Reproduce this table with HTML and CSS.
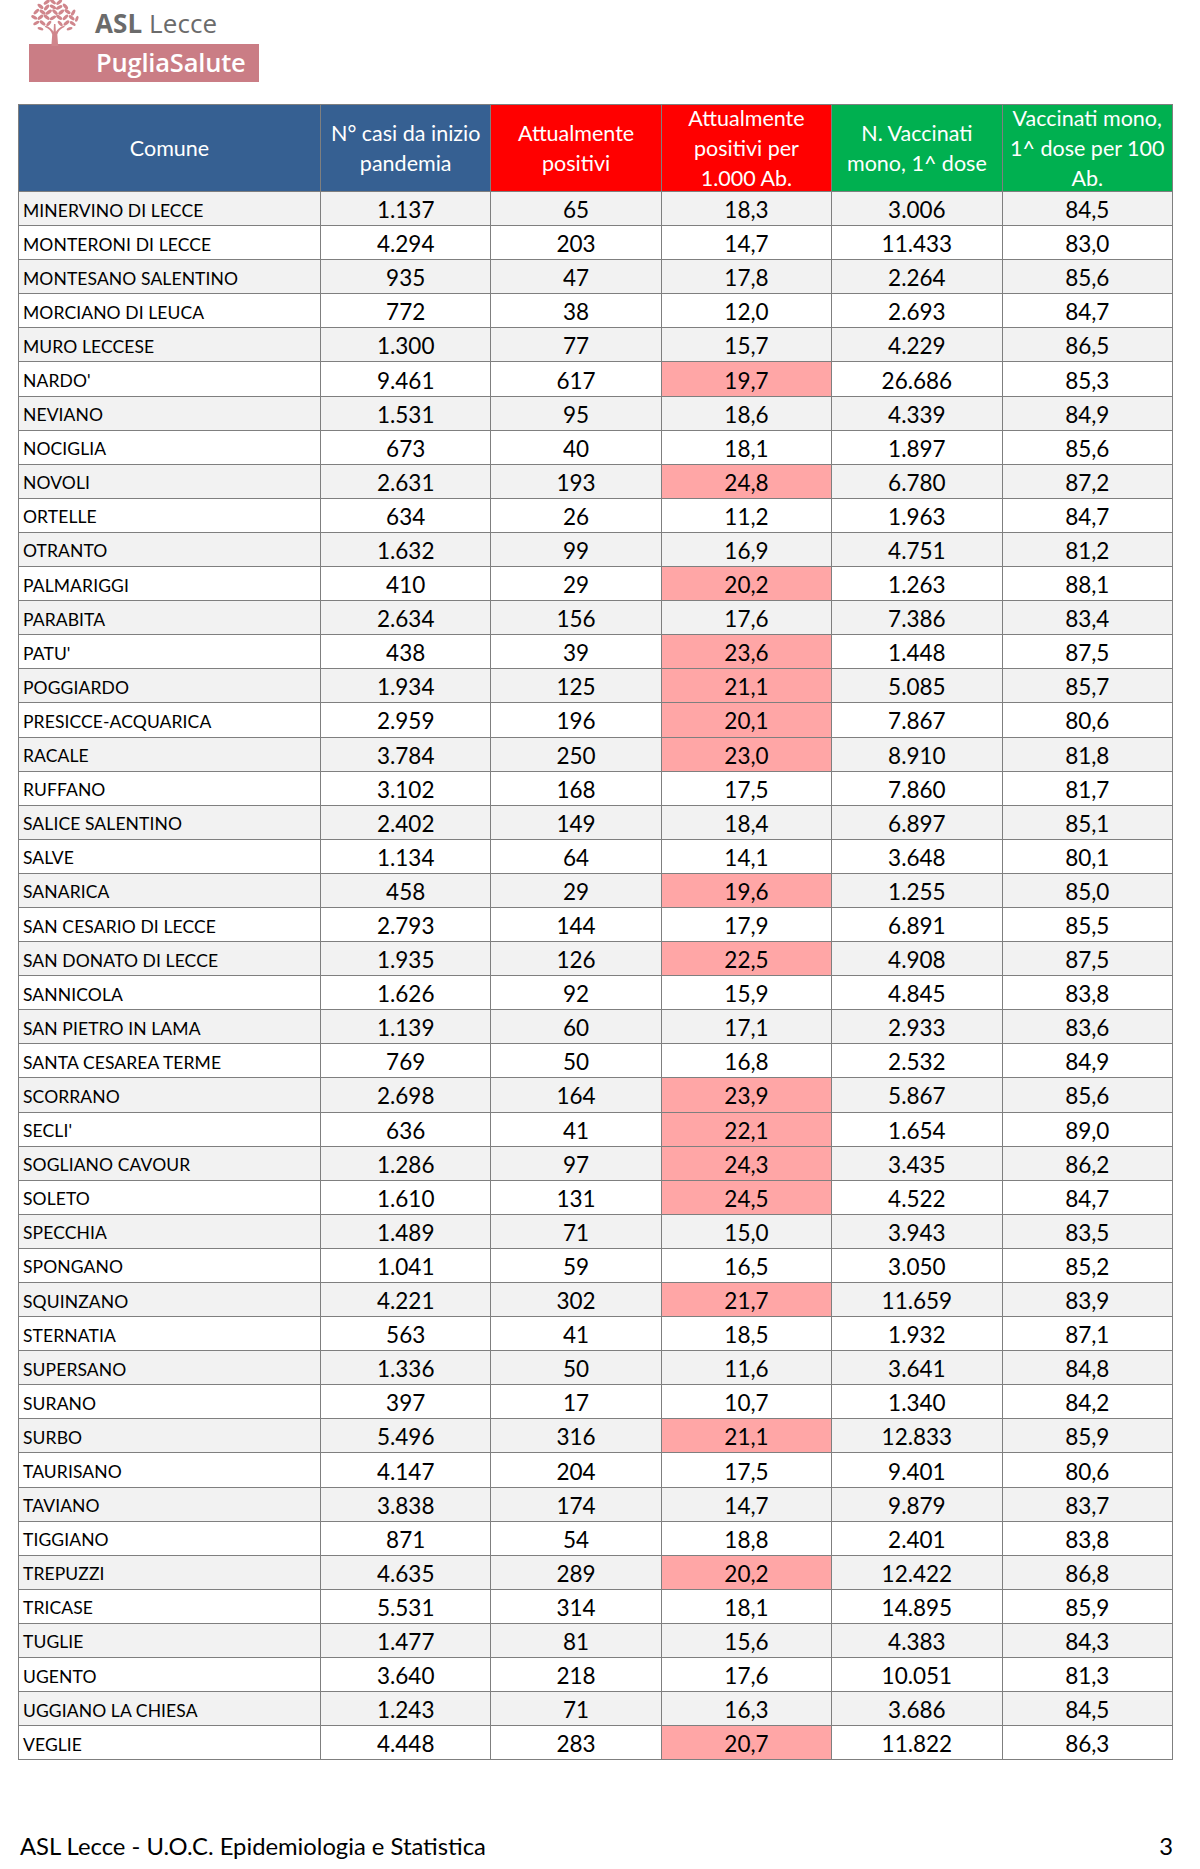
FILE: index.html
```html
<!DOCTYPE html>
<html lang="it">
<head>
<meta charset="utf-8">
<title>ASL Lecce - Report</title>
<link rel="stylesheet" href="styles.css">
</head>
<body>
<header class="logo">
  <div class="logo-top">
    <svg class="tree" viewBox="0 0 51 45" width="53" height="47" aria-hidden="true">
      <g fill="#d0868c">
        <ellipse cx="18" cy="3" rx="3.4" ry="1.6" transform="rotate(-35 18 3)"/>
        <ellipse cx="24" cy="2.5" rx="3.4" ry="1.6" transform="rotate(40 24 2.5)"/>
        <ellipse cx="30" cy="3" rx="3.4" ry="1.6" transform="rotate(-40 30 3)"/>
        <ellipse cx="12" cy="7" rx="3.4" ry="1.6" transform="rotate(40 12 7)"/>
        <ellipse cx="18" cy="8" rx="3.4" ry="1.6" transform="rotate(-50 18 8)"/>
        <ellipse cx="24" cy="7.5" rx="3.4" ry="1.6" transform="rotate(30 24 7.5)"/>
        <ellipse cx="30" cy="8" rx="3.4" ry="1.6" transform="rotate(-30 30 8)"/>
        <ellipse cx="36" cy="7" rx="3.4" ry="1.6" transform="rotate(50 36 7)"/>
        <ellipse cx="8" cy="12" rx="3.4" ry="1.6" transform="rotate(-45 8 12)"/>
        <ellipse cx="14" cy="12.5" rx="3.4" ry="1.6" transform="rotate(35 14 12.5)"/>
        <ellipse cx="20" cy="12.5" rx="3.4" ry="1.6" transform="rotate(-35 20 12.5)"/>
        <ellipse cx="26" cy="12.5" rx="3.4" ry="1.6" transform="rotate(45 26 12.5)"/>
        <ellipse cx="32" cy="12.5" rx="3.4" ry="1.6" transform="rotate(-40 32 12.5)"/>
        <ellipse cx="38" cy="12" rx="3.4" ry="1.6" transform="rotate(35 38 12)"/>
        <ellipse cx="43.5" cy="13" rx="3.2" ry="1.5" transform="rotate(-60 43.5 13)"/>
        <ellipse cx="6" cy="17.5" rx="3.2" ry="1.5" transform="rotate(30 6 17.5)"/>
        <ellipse cx="12" cy="17.5" rx="3.4" ry="1.6" transform="rotate(-40 12 17.5)"/>
        <ellipse cx="18" cy="17.5" rx="3.4" ry="1.6" transform="rotate(40 18 17.5)"/>
        <ellipse cx="24" cy="18" rx="3.4" ry="1.6" transform="rotate(-30 24 18)"/>
        <ellipse cx="30" cy="17.5" rx="3.4" ry="1.6" transform="rotate(35 30 17.5)"/>
        <ellipse cx="36" cy="17.5" rx="3.4" ry="1.6" transform="rotate(-45 36 17.5)"/>
        <ellipse cx="42" cy="18" rx="3.4" ry="1.6" transform="rotate(40 42 18)"/>
        <ellipse cx="47" cy="19" rx="3" ry="1.4" transform="rotate(-70 47 19)"/>
        <ellipse cx="8" cy="23" rx="3.2" ry="1.5" transform="rotate(-30 8 23)"/>
        <ellipse cx="14" cy="23" rx="3.4" ry="1.6" transform="rotate(40 14 23)"/>
        <ellipse cx="20" cy="23.5" rx="3.2" ry="1.5" transform="rotate(-50 20 23.5)"/>
        <ellipse cx="31" cy="23.5" rx="3.2" ry="1.5" transform="rotate(50 31 23.5)"/>
        <ellipse cx="37" cy="23" rx="3.4" ry="1.6" transform="rotate(-40 37 23)"/>
        <ellipse cx="43" cy="23.5" rx="3.2" ry="1.5" transform="rotate(35 43 23.5)"/>
        <ellipse cx="12" cy="28.5" rx="3" ry="1.4" transform="rotate(20 12 28.5)"/>
        <ellipse cx="40" cy="28.5" rx="3" ry="1.4" transform="rotate(-20 40 28.5)"/>
        <path d="M22.5 45 L23.3 34 Q22 29 16 26.5 L17 25.6 Q22.5 27.5 24.6 31.5 L25 24 L26.4 24 L26.8 31.5 Q29 27.5 34.5 25.6 L35.5 26.5 Q29.5 29 28.2 34 L29 45 Z"/>
      </g>
    </svg>
    <div class="asl"><b>ASL</b> Lecce</div>
  </div>
  <div class="bar">PugliaSalute</div>
</header>

<table class="data">
  <colgroup>
    <col class="c-name"><col class="c-num"><col class="c-num"><col class="c-num"><col class="c-num"><col class="c-num">
  </colgroup>
  <thead>
    <tr>
      <th class="blue">Comune</th>
      <th class="blue">N° casi da inizio pandemia</th>
      <th class="red">Attualmente positivi</th>
      <th class="red"><div class="hwrap">Attualmente positivi per 1.000 Ab.</div></th>
      <th class="green">N. Vaccinati mono, 1^ dose</th>
      <th class="green"><div class="hwrap">Vaccinati mono, 1^ dose per 100 Ab.</div></th>
    </tr>
  </thead>
  <tbody>
    <tr><td>MINERVINO DI LECCE</td><td>1.137</td><td>65</td><td>18,3</td><td>3.006</td><td>84,5</td></tr>
    <tr><td>MONTERONI DI LECCE</td><td>4.294</td><td>203</td><td>14,7</td><td>11.433</td><td>83,0</td></tr>
    <tr><td>MONTESANO SALENTINO</td><td>935</td><td>47</td><td>17,8</td><td>2.264</td><td>85,6</td></tr>
    <tr><td>MORCIANO DI LEUCA</td><td>772</td><td>38</td><td>12,0</td><td>2.693</td><td>84,7</td></tr>
    <tr><td>MURO LECCESE</td><td>1.300</td><td>77</td><td>15,7</td><td>4.229</td><td>86,5</td></tr>
    <tr><td>NARDO'</td><td>9.461</td><td>617</td><td class="hi">19,7</td><td>26.686</td><td>85,3</td></tr>
    <tr><td>NEVIANO</td><td>1.531</td><td>95</td><td>18,6</td><td>4.339</td><td>84,9</td></tr>
    <tr><td>NOCIGLIA</td><td>673</td><td>40</td><td>18,1</td><td>1.897</td><td>85,6</td></tr>
    <tr><td>NOVOLI</td><td>2.631</td><td>193</td><td class="hi">24,8</td><td>6.780</td><td>87,2</td></tr>
    <tr><td>ORTELLE</td><td>634</td><td>26</td><td>11,2</td><td>1.963</td><td>84,7</td></tr>
    <tr><td>OTRANTO</td><td>1.632</td><td>99</td><td>16,9</td><td>4.751</td><td>81,2</td></tr>
    <tr><td>PALMARIGGI</td><td>410</td><td>29</td><td class="hi">20,2</td><td>1.263</td><td>88,1</td></tr>
    <tr><td>PARABITA</td><td>2.634</td><td>156</td><td>17,6</td><td>7.386</td><td>83,4</td></tr>
    <tr><td>PATU'</td><td>438</td><td>39</td><td class="hi">23,6</td><td>1.448</td><td>87,5</td></tr>
    <tr><td>POGGIARDO</td><td>1.934</td><td>125</td><td class="hi">21,1</td><td>5.085</td><td>85,7</td></tr>
    <tr><td>PRESICCE-ACQUARICA</td><td>2.959</td><td>196</td><td class="hi">20,1</td><td>7.867</td><td>80,6</td></tr>
    <tr><td>RACALE</td><td>3.784</td><td>250</td><td class="hi">23,0</td><td>8.910</td><td>81,8</td></tr>
    <tr><td>RUFFANO</td><td>3.102</td><td>168</td><td>17,5</td><td>7.860</td><td>81,7</td></tr>
    <tr><td>SALICE SALENTINO</td><td>2.402</td><td>149</td><td>18,4</td><td>6.897</td><td>85,1</td></tr>
    <tr><td>SALVE</td><td>1.134</td><td>64</td><td>14,1</td><td>3.648</td><td>80,1</td></tr>
    <tr><td>SANARICA</td><td>458</td><td>29</td><td class="hi">19,6</td><td>1.255</td><td>85,0</td></tr>
    <tr><td>SAN CESARIO DI LECCE</td><td>2.793</td><td>144</td><td>17,9</td><td>6.891</td><td>85,5</td></tr>
    <tr><td>SAN DONATO DI LECCE</td><td>1.935</td><td>126</td><td class="hi">22,5</td><td>4.908</td><td>87,5</td></tr>
    <tr><td>SANNICOLA</td><td>1.626</td><td>92</td><td>15,9</td><td>4.845</td><td>83,8</td></tr>
    <tr><td>SAN PIETRO IN LAMA</td><td>1.139</td><td>60</td><td>17,1</td><td>2.933</td><td>83,6</td></tr>
    <tr><td>SANTA CESAREA TERME</td><td>769</td><td>50</td><td>16,8</td><td>2.532</td><td>84,9</td></tr>
    <tr><td>SCORRANO</td><td>2.698</td><td>164</td><td class="hi">23,9</td><td>5.867</td><td>85,6</td></tr>
    <tr><td>SECLI'</td><td>636</td><td>41</td><td class="hi">22,1</td><td>1.654</td><td>89,0</td></tr>
    <tr><td>SOGLIANO CAVOUR</td><td>1.286</td><td>97</td><td class="hi">24,3</td><td>3.435</td><td>86,2</td></tr>
    <tr><td>SOLETO</td><td>1.610</td><td>131</td><td class="hi">24,5</td><td>4.522</td><td>84,7</td></tr>
    <tr><td>SPECCHIA</td><td>1.489</td><td>71</td><td>15,0</td><td>3.943</td><td>83,5</td></tr>
    <tr><td>SPONGANO</td><td>1.041</td><td>59</td><td>16,5</td><td>3.050</td><td>85,2</td></tr>
    <tr><td>SQUINZANO</td><td>4.221</td><td>302</td><td class="hi">21,7</td><td>11.659</td><td>83,9</td></tr>
    <tr><td>STERNATIA</td><td>563</td><td>41</td><td>18,5</td><td>1.932</td><td>87,1</td></tr>
    <tr><td>SUPERSANO</td><td>1.336</td><td>50</td><td>11,6</td><td>3.641</td><td>84,8</td></tr>
    <tr><td>SURANO</td><td>397</td><td>17</td><td>10,7</td><td>1.340</td><td>84,2</td></tr>
    <tr><td>SURBO</td><td>5.496</td><td>316</td><td class="hi">21,1</td><td>12.833</td><td>85,9</td></tr>
    <tr><td>TAURISANO</td><td>4.147</td><td>204</td><td>17,5</td><td>9.401</td><td>80,6</td></tr>
    <tr><td>TAVIANO</td><td>3.838</td><td>174</td><td>14,7</td><td>9.879</td><td>83,7</td></tr>
    <tr><td>TIGGIANO</td><td>871</td><td>54</td><td>18,8</td><td>2.401</td><td>83,8</td></tr>
    <tr><td>TREPUZZI</td><td>4.635</td><td>289</td><td class="hi">20,2</td><td>12.422</td><td>86,8</td></tr>
    <tr><td>TRICASE</td><td>5.531</td><td>314</td><td>18,1</td><td>14.895</td><td>85,9</td></tr>
    <tr><td>TUGLIE</td><td>1.477</td><td>81</td><td>15,6</td><td>4.383</td><td>84,3</td></tr>
    <tr><td>UGENTO</td><td>3.640</td><td>218</td><td>17,6</td><td>10.051</td><td>81,3</td></tr>
    <tr><td>UGGIANO LA CHIESA</td><td>1.243</td><td>71</td><td>16,3</td><td>3.686</td><td>84,5</td></tr>
    <tr><td>VEGLIE</td><td>4.448</td><td>283</td><td class="hi">20,7</td><td>11.822</td><td>86,3</td></tr>
  </tbody>
</table>

<footer class="foot">
  <span>ASL Lecce - U.O.C. Epidemiologia e Statistica</span>
  <span>3</span>
</footer>
</body>
</html>
```
FILE: styles.css
```css
* { box-sizing: border-box; }
html, body { margin: 0; padding: 0; background: #ffffff; }
body {
  width: 1200px;
  height: 1869px;
  overflow: hidden;
  font-family: Lato, "Open Sans", "DejaVu Sans", sans-serif;
  color: #000;
}

/* Logo */
.logo {
  margin-left: 29px;
  width: 230px;
  height: 104px;
}
.logo-top {
  display: flex;
  align-items: flex-end;
  height: 44px;
}
.tree { display: block; flex: none; margin-left: -1px; margin-bottom: -2px; }
.asl {
  font-family: "Open Sans", "DejaVu Sans", sans-serif;
  font-size: 26px;
  line-height: 30px;
  color: #6b6b6b;
  margin-left: 14px;
  margin-bottom: 6px;
  letter-spacing: 0.1px;
}
.asl b { font-weight: 700; }
.bar {
  height: 38px;
  background: #ca7d85;
  color: #ffffff;
  font-family: "Open Sans", "DejaVu Sans", sans-serif;
  font-weight: 600;
  font-size: 25.5px;
  line-height: 37px;
  padding-left: 67px;
  letter-spacing: -0.2px;
}

/* Table */
.data {
  margin-left: 18px;
  border-collapse: collapse;
  table-layout: fixed;
  width: 1154px;
}
.c-name { width: 302px; }
.c-num { width: 170.4px; }
.data th, .data td {
  border: 1px solid #7f7f7f;
  padding: 0;
}
.data th {
  height: 87px;
  color: #ffffff;
  font-weight: 400;
  font-size: 21.5px;
  line-height: 30px;
  text-align: center;
  vertical-align: middle;
  padding: 0 5px;
  overflow: hidden;
}
.hwrap {
  height: 85px;
  display: flex;
  align-items: center;
  justify-content: center;
  overflow: hidden;
}
.blue { background: #366092; }
.red { background: #ff0000; }
.green { background: #00b050; }

.data td {
  height: 34.1px;
  font-size: 22.5px;
  line-height: 24px;
  text-align: center;
  vertical-align: middle;
  padding-top: 3px;
}
.data td:first-child {
  font-size: 17.5px;
  text-align: left;
  padding-left: 4px;
  padding-top: 4px;
  letter-spacing: 0.1px;
}
.data tbody tr:nth-child(odd) td { background: #f2f2f2; }
.data tbody tr td.hi { background: #ffa6a6; }

/* Footer */
.foot {
  display: flex;
  justify-content: space-between;
  margin-top: 72px;
  padding: 0 27px 0 20px;
  font-size: 23.8px;
  line-height: 28px;
}
```
